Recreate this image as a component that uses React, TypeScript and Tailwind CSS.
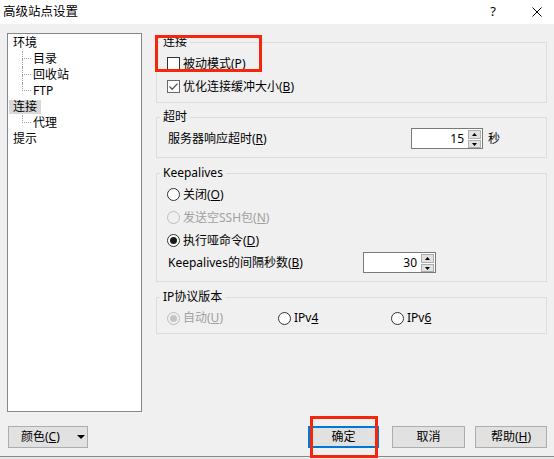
import React from "react";

//    ====== 高级站点设置 ======

const FONT = "font-['Noto_Sans','Noto_Sans_CJK_SC',sans-serif]";

function CheckBox({ checked }: { checked?: boolean }) {
  return (
    <span
      className={`w-[13px] h-[13px] border bg-white flex items-center justify-center shrink-0 ${
        checked ? "border-[#6a6a6a]" : "border-[#333333]"
      }`}
    >
      {checked && (
        <svg width="11" height="11" viewBox="0 0 11 11">
          <path d="M1.5 5.5 L4.2 8.2 L9.5 2.6" fill="none" stroke="#555555" strokeWidth="1.3" />
        </svg>
      )}
    </span>
  );
}

function Radio({ checked, disabled }: { checked?: boolean; disabled?: boolean }) {
  return (
    <span
      className={`w-[13px] h-[13px] rounded-full border flex items-center justify-center shrink-0 ${
        disabled ? "border-[#bcbcbc] bg-[#f0f0f0]" : "border-[#333333] bg-white"
      }`}
    >
      {checked && (
        <span className={`w-[7px] h-[7px] rounded-full ${disabled ? "bg-[#c4c4c4]" : "bg-[#1a1a1a]"}`} />
      )}
    </span>
  );
}

function SpinBox({ value }: { value: string }) {
  return (
    <div className="flex h-[21px] border border-[#7a7a7a] bg-white">
      <span className="flex-1 text-right pr-[4px] leading-[19px]">{value}</span>
      <div className="flex flex-col w-[13px] mt-[1px] mr-[1px] gap-[1px]">
        <span className="h-[9px] bg-[#e1e1e1] border border-[#adadad] flex items-center justify-center">
          <svg width="5" height="3" viewBox="0 0 5 3">
            <path d="M0 3 L2.5 0 L5 3 Z" fill="#000" />
          </svg>
        </span>
        <span className="h-[8px] bg-[#e1e1e1] border border-[#adadad] flex items-center justify-center">
          <svg width="5" height="3" viewBox="0 0 5 3">
            <path d="M0 0 L5 0 L2.5 3 Z" fill="#000" />
          </svg>
        </span>
      </div>
    </div>
  );
}

// Khung nhóm (group box) — padding đặt ở div bên trong để legend không bị lệch
function Group({
  title,
  children,
  className,
  bodyClassName,
}: {
  title: string;
  children: React.ReactNode;
  className?: string;
  bodyClassName?: string;
}) {
  return (
    <fieldset className={`border border-[#dcdcdc] ${className ?? ""}`}>
      <legend className="ml-[3px] px-[3px] leading-[16px]">{title}</legend>
      <div className={bodyClassName}>{children}</div>
    </fieldset>
  );
}

// Nhánh cây (đường chấm)
function TreeChild({ label, last }: { label: string; last?: boolean }) {
  return (
    <div className="flex h-[16px]">
      <div className="ml-[14px] w-[9px] flex flex-col">
        <span className="h-[8px] border-l border-b border-dotted border-[#a0a0a0]" />
        <span className={`h-[8px] ${last ? "" : "border-l border-dotted border-[#a0a0a0]"}`} />
      </div>
      <span className="ml-[2px] leading-[16px]">{label}</span>
    </div>
  );
}

function Btn({ children, className }: { children: React.ReactNode; className?: string }) {
  return (
    <button className={`h-[22px] bg-[#e1e1e1] border border-[#adadad] flex items-center justify-center ${className ?? ""}`}>
      {children}
    </button>
  );
}

export default function App() {
  return (
    <div className={`relative w-[554px] h-[459px] overflow-hidden bg-[#f0f0f0] flex flex-col text-[12px] text-black ${FONT}`}>
      {/* Thanh tiêu đề */}
      <div className="h-[24px] bg-white flex items-center shrink-0">
        <span className="pl-[3px] text-[12.5px]">高级站点设置</span>
        <div className="ml-auto mr-[12px] flex items-center">
          <span className="w-[12px] text-center text-[13px]">?</span>
          <svg className="ml-[33px]" width="10" height="10" viewBox="0 0 10 10">
            <path d="M0.5 0.5 L9.5 9.5 M9.5 0.5 L0.5 9.5" stroke="#000" strokeWidth="1" />
          </svg>
        </div>
      </div>

      <div className="flex pt-[9px]">
        {/* Cây bên trái */}
        <div className="ml-[7px] w-[135px] h-[379px] border border-[#828790] bg-white pt-[1px]">
          <div className="h-[16px] leading-[16px] pl-[5px]">环境</div>
          <TreeChild label="目录" />
          <TreeChild label="回收站" />
          <TreeChild label="FTP" last />
          <div className="h-[16px] flex items-center pl-[1px]">
            <span className="bg-[#d9d9d9] px-[4px] leading-[14px]">连接</span>
          </div>
          <TreeChild label="代理" last />
          <div className="h-[16px] leading-[16px] pl-[5px]">提示</div>
        </div>

        {/* Nội dung bên phải */}
        <div className="ml-[14px] w-[391px] flex flex-col pt-[1px]">
          <Group title="连接" bodyClassName="pt-[2px] pb-[4px] pl-[10px]">
            <div className="h-[23px] flex items-center">
              <CheckBox />
              <span className="ml-[3px]">
                被动模式(<u>P</u>)
              </span>
            </div>
            <div className="h-[23px] flex items-center">
              <CheckBox checked />
              <span className="ml-[3px]">
                优化连接缓冲大小(<u>B</u>)
              </span>
            </div>
          </Group>

          <Group title="超时" className="mt-[6px]" bodyClassName="pt-[2px] pb-[7px] pl-[11px]">
            <div className="h-[23px] flex items-center">
              <span className="w-[243px]">
                服务器响应超时(<u>R</u>)
              </span>
              <div className="w-[72px]">
                <SpinBox value="15" />
              </div>
              <span className="ml-[5px]">秒</span>
            </div>
          </Group>

          <Group title="Keepalives" className="mt-[7px]" bodyClassName="pt-[2px] pb-[8px] pl-[10px]">
            <div className="h-[23px] flex items-center">
              <Radio />
              <span className="ml-[3px]">
                关闭(<u>O</u>)
              </span>
            </div>
            <div className="h-[23px] flex items-center text-[#a0a0a0]">
              <Radio disabled />
              <span className="ml-[3px]">
                发送空SSH包(<u>N</u>)
              </span>
            </div>
            <div className="h-[23px] flex items-center">
              <Radio checked />
              <span className="ml-[3px]">
                执行哑命令(<u>D</u>)
              </span>
            </div>
            <div className="h-[21px] flex items-center">
              <span className="w-[196px] pl-[1px]">
                Keepalives的间隔秒数(<u>B</u>)
              </span>
              <div className="w-[73px]">
                <SpinBox value="30" />
              </div>
            </div>
          </Group>

          <Group title="IP协议版本" className="mt-[7px]" bodyClassName="pt-[2px] pb-[4px] pl-[10px]">
            <div className="h-[22px] flex items-center">
              <div className="w-[111px] flex items-center text-[#a0a0a0]">
                <Radio checked disabled />
                <span className="ml-[3px]">
                  自动(<u>U</u>)
                </span>
              </div>
              <div className="w-[113px] flex items-center">
                <Radio />
                <span className="ml-[3px]">
                  IPv<u>4</u>
                </span>
              </div>
              <div className="flex items-center">
                <Radio />
                <span className="ml-[3px]">
                  IPv<u>6</u>
                </span>
              </div>
            </div>
          </Group>
        </div>
      </div>

      {/* Nút dưới cùng */}
      <div className="flex items-center mt-[14px]">
        <Btn className="ml-[8px] w-[80px] !justify-start pl-[12px]">
          <span>
            颜色(<u>C</u>)
          </span>
          <svg className="ml-[17px]" width="8" height="4" viewBox="0 0 8 4">
            <path d="M0 0 L8 0 L4 4 Z" fill="#000" />
          </svg>
        </Btn>
        <div className="ml-auto mr-[7px] flex items-center">
          <Btn className="w-[71px] !border-2 !border-[#0078d7]">确定</Btn>
          <Btn className="ml-[13px] w-[73px]">取消</Btn>
          <Btn className="ml-[10px] w-[72px]">
            帮助(<u>H</u>)
          </Btn>
        </div>
      </div>
      <div className="mt-[8px] h-[3px] border-t border-[#8a8a8a] bg-[#e8e8e8]" />

      {/* Khung đỏ đánh dấu */}
      <div className="absolute left-[155px] top-[35px] w-[107px] h-[37px] border-[3px] border-[#f4260c]" />
      <div className="absolute left-[310px] top-[416px] w-[68px] h-[42px] border-[3px] border-[#f4260c]" />
    </div>
  );
}
